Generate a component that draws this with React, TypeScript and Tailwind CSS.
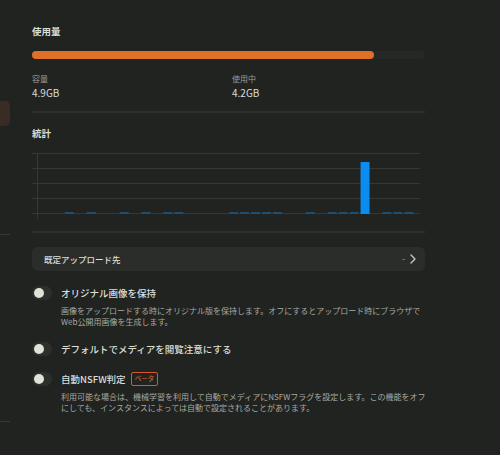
import React from 'react';

const font = { fontFamily: '"Noto Sans CJK JP", "Noto Sans", sans-serif' };

// slot index -> bar height (px); slots are ~10.95px apart starting at x=43
const bars: Record<number, number> = {
  2: 2, 4: 2, 7: 2, 9: 2, 11: 2, 12: 2, 17: 2, 18: 2, 19: 2, 20: 2, 21: 2,
  24: 2, 26: 2, 27: 2, 28: 2, 29: 52, 31: 2, 32: 2, 33: 2,
};

const Chart: React.FC = () => {
  const grid = [4, 19, 34, 49, 64];
  return (
    <svg width="388" height="72" viewBox="0 0 388 72" className="block">
      {grid.map((y) => (
        <line key={y} x1="0" x2="388" y1={y + 0.5} y2={y + 0.5} stroke="#363834" strokeWidth="1" />
      ))}
      <line x1="5.5" x2="5.5" y1="4" y2="70" stroke="#363834" strokeWidth="1" />
      {Object.entries(bars).map(([k, h]) => {
        const x = 11 + Number(k) * 10.95;
        return (
          <rect
            key={k}
            x={x}
            y={65 - h}
            width="9"
            height={h}
            fill={h > 5 ? '#0b8cf0' : '#1d4f73'}
          />
        );
      })}
    </svg>
  );
};

const Toggle: React.FC = () => (
  <div className="w-[20px] h-[14px] rounded-full bg-[#2d2f2c] flex items-center pl-[2px] shrink-0">
    <div className="w-[10px] h-[10px] rounded-full bg-[#dfe4da]" />
  </div>
);

export default function App() {
  return (
    <div className="min-h-[455px] w-[500px] bg-[#212320] flex text-[#dcdfd8]" style={font}>
      {/* sidebar edge */}
      <div className="w-[10px] shrink-0 flex flex-col">
        <div className="mt-[101px] h-[25px] w-[10px] rounded-r-[5px] bg-[#3a2b25]" />
        <div className="mt-[108px] h-px bg-[#363834]" />
        <div className="mt-[186px] h-px bg-[#363834]" />
      </div>

      <div className="ml-[22px] w-[393px] pt-[24px]">
        <h2 className="text-[9.5px] leading-[14px] font-bold">使用量</h2>
        <div className="mt-[13px] h-[8px] rounded-full bg-[#262825]">
          <div className="h-full w-[87%] rounded-full bg-[#e06f27]" />
        </div>

        <div className="mt-[14px] grid grid-cols-[200px_1fr]">
          <div>
            <div className="text-[8px] leading-[12px] text-[#9c9e99]">容量</div>
            <div className="text-[10px] leading-[14px] mt-[1px]">4.9GB</div>
          </div>
          <div>
            <div className="text-[8px] leading-[12px] text-[#9c9e99]">使用中</div>
            <div className="text-[10px] leading-[14px] mt-[1px]">4.2GB</div>
          </div>
        </div>

        <div className="mt-[11px] h-[2px] bg-[#2e302d]" />

        <h2 className="mt-[13px] text-[9.5px] leading-[14px] font-bold">統計</h2>
        <div className="mt-[9px]">
          <Chart />
        </div>

        <div className="mt-[10px] h-[2px] bg-[#2e302d]" />

        <div className="mt-[14px] h-[24px] rounded-[6px] bg-[#2b2d2a] flex items-center justify-between pl-[12px] pr-[8px]">
          <span className="text-[8.5px] font-medium">既定アップロード先</span>
          <span className="flex items-center gap-[4px] text-[#9c9e99] text-[9px]">
            -
            <svg width="8" height="12" viewBox="0 0 8 12" fill="none">
              <path d="M2 2 L6 6 L2 10" stroke="#c9ccc6" strokeWidth="1.3" strokeLinecap="round" strokeLinejoin="round" />
            </svg>
          </span>
        </div>

        <div className="mt-[15px] flex items-center gap-[9px]">
          <Toggle />
          <span className="text-[9.5px] leading-[14px] font-medium">オリジナル画像を保持</span>
        </div>
        <p className="mt-[5px] ml-[29px] text-[8px] leading-[11px] text-[#a6a9a3] whitespace-nowrap">
          画像をアップロードする時にオリジナル版を保持します。オフにするとアップロード時にブラウザで
          <br />
          Web公開用画像を生成します。
        </p>

        <div className="mt-[15px] flex items-center gap-[9px]">
          <Toggle />
          <span className="text-[9.5px] leading-[14px] font-medium">デフォルトでメディアを閲覧注意にする</span>
        </div>

        <div className="mt-[16px] flex items-center gap-[9px]">
          <Toggle />
          <span className="text-[9.5px] leading-[14px] font-medium">自動NSFW判定</span>
          <span className="-ml-[4px] h-[14px] px-[3px] flex items-center rounded-[2px] border border-[#d9562b] text-[#e0663a] text-[6.5px]">
            ベータ
          </span>
        </div>
        <p className="mt-[5px] ml-[29px] text-[8px] leading-[11px] text-[#a6a9a3] whitespace-nowrap">
          利用可能な場合は、機械学習を利用して自動でメディアにNSFWフラグを設定します。この機能をオフ
          <br />
          にしても、インスタンスによっては自動で設定されることがあります。
        </p>
      </div>
    </div>
  );
}
